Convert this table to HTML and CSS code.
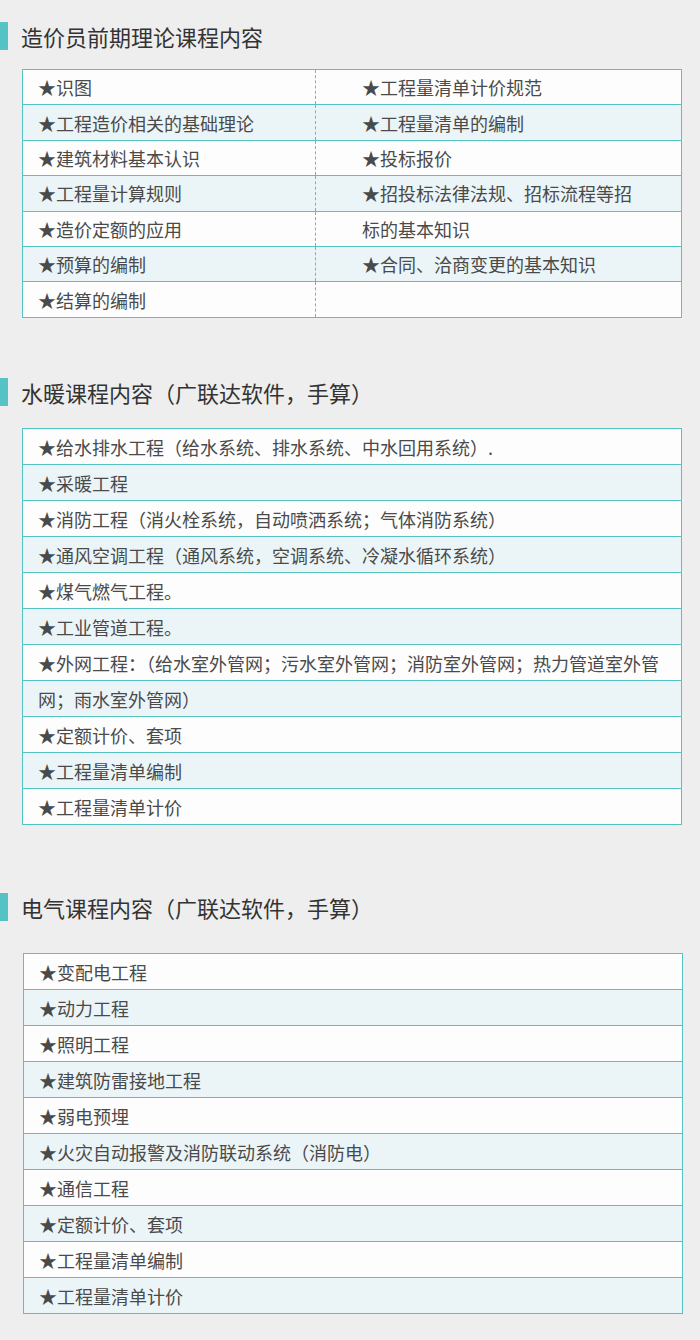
FILE: index.html
```html
<!DOCTYPE html>
<html lang="zh-CN">
<head>
  <meta charset="UTF-8">
  <meta name="viewport" content="width=device-width, initial-scale=1.0">
  <title>课程内容</title>
  <link rel="stylesheet" href="styles.css">
</head>
<body>
  <div class="page">

    <!-- 理论课程 -->
    <section class="block block-theory">
      <h2 class="block-title">造价员前期理论课程内容</h2>
      <div class="course-table two-col">
        <div class="row"><div class="cell">★识图</div><div class="cell">★工程量清单计价规范</div></div>
        <div class="row"><div class="cell">★工程造价相关的基础理论</div><div class="cell">★工程量清单的编制</div></div>
        <div class="row"><div class="cell">★建筑材料基本认识</div><div class="cell">★投标报价</div></div>
        <div class="row"><div class="cell">★工程量计算规则</div><div class="cell">★招投标法律法规、招标流程等招</div></div>
        <div class="row"><div class="cell">★造价定额的应用</div><div class="cell">标的基本知识</div></div>
        <div class="row"><div class="cell">★预算的编制</div><div class="cell">★合同、洽商变更的基本知识</div></div>
        <div class="row"><div class="cell">★结算的编制</div><div class="cell"></div></div>
      </div>
    </section>

    <!-- 水暖 -->
    <section class="block block-water">
      <h2 class="block-title">水暖课程内容（广联达软件，手算）</h2>
      <div class="course-table">
        <div class="row"><div class="cell">★给水排水工程（给水系统、排水系统、中水回用系统）.</div></div>
        <div class="row"><div class="cell">★采暖工程</div></div>
        <div class="row"><div class="cell">★消防工程（消火栓系统，自动喷洒系统；气体消防系统）</div></div>
        <div class="row"><div class="cell">★通风空调工程（通风系统，空调系统、冷凝水循环系统）</div></div>
        <div class="row"><div class="cell">★煤气燃气工程。</div></div>
        <div class="row"><div class="cell">★工业管道工程。</div></div>
        <div class="row"><div class="cell">★外网工程：（给水室外管网；污水室外管网；消防室外管网；热力管道室外管</div></div>
        <div class="row"><div class="cell">网；雨水室外管网）</div></div>
        <div class="row"><div class="cell">★定额计价、套项</div></div>
        <div class="row"><div class="cell">★工程量清单编制</div></div>
        <div class="row"><div class="cell">★工程量清单计价</div></div>
      </div>
    </section>

    <!-- 电气 -->
    <section class="block block-electric">
      <h2 class="block-title">电气课程内容（广联达软件，手算）</h2>
      <div class="course-table">
        <div class="row"><div class="cell">★变配电工程</div></div>
        <div class="row"><div class="cell">★动力工程</div></div>
        <div class="row"><div class="cell">★照明工程</div></div>
        <div class="row"><div class="cell">★建筑防雷接地工程</div></div>
        <div class="row"><div class="cell">★弱电预埋</div></div>
        <div class="row"><div class="cell">★火灾自动报警及消防联动系统（消防电）</div></div>
        <div class="row"><div class="cell">★通信工程</div></div>
        <div class="row"><div class="cell">★定额计价、套项</div></div>
        <div class="row"><div class="cell">★工程量清单编制</div></div>
        <div class="row"><div class="cell">★工程量清单计价</div></div>
      </div>
    </section>

  </div>
</body>
</html>
```

FILE: styles.css
```css
/* Page */
body {
  margin: 0;
  background-color: #eeeeee;
  color: #4a4a4a;
  font-family: "Noto Sans CJK SC", "Noto Sans", sans-serif;
}

.page {
  width: 700px;
  padding-top: 22px;
}

/* Section title with teal bar */
.block-title {
  display: flex;
  align-items: center;
  height: 28px;
  margin: 0;
  font-size: 22px;
  font-weight: normal;
  color: #333;
}

.block-title::before {
  content: "";
  width: 8px;
  height: 28px;
  margin-right: 13px;
  background-color: #55c3c3;
}

/* Spacing between blocks */
.block-theory .course-table {
  margin-top: 19px;
}

.block-water {
  margin-top: 60px;
}

.block-water .course-table {
  margin-top: 22px;
}

.block-electric {
  margin-top: 68px;
}

.block-electric .course-table {
  margin-top: 32px;
  margin-left: 23px;
}

/* Table */
.course-table {
  width: 660px;
  margin-left: 22px;
  border: 1px solid #55c3c3;
  box-sizing: border-box;
  font-size: 18px;
}

.row {
  display: flex;
  height: 36px;
  border-bottom: 1px solid #55c3c3;
  box-sizing: border-box;
  background-color: #fdfdfd;
}

.row:nth-child(even) {
  background-color: #ebf5f8;
}

.row:last-child {
  border-bottom: none;
  height: 35px;
}

.cell {
  flex: 1;
  display: flex;
  align-items: center;
  padding-left: 15px;
  box-sizing: border-box;
  white-space: nowrap;
}

/* Two column table (theory) */
.two-col .row {
  height: 35.4px;
}

.two-col .row:last-child {
  height: 35px;
}

.two-col .cell:first-child {
  flex: 0 0 292px;
}

.two-col .cell + .cell {
  padding-left: 46px;
  border-left: 1px dashed #55c3c3;
}
```
